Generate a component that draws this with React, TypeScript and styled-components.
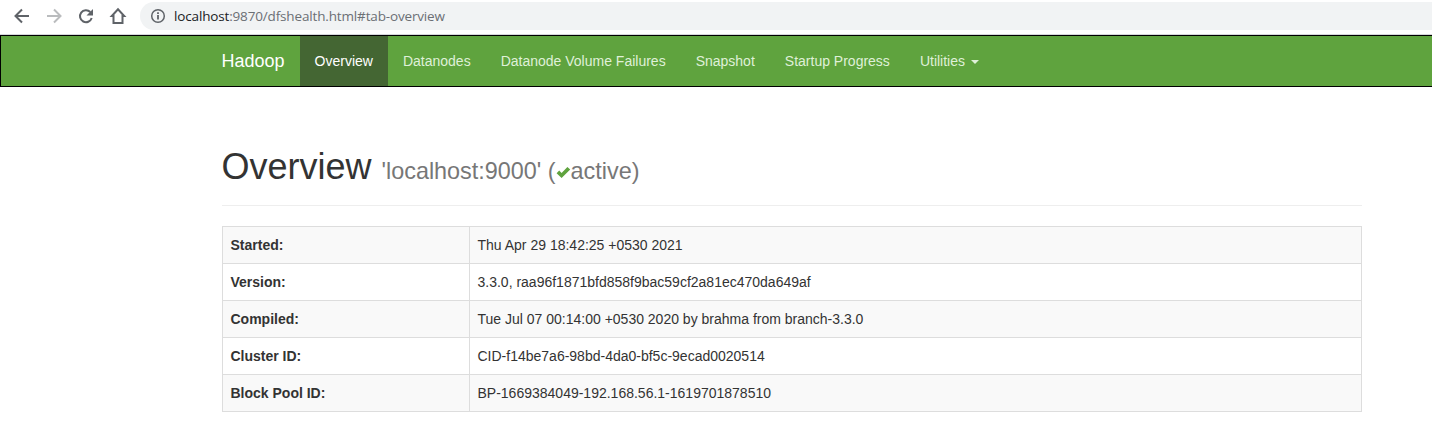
import React from "react";
import styled, { createGlobalStyle } from "styled-components";

const Global = createGlobalStyle`
  *{box-sizing:border-box}
  body{margin:0;background:#fff;color:#333;font:14px/20px "Liberation Sans",Arial,sans-serif;overflow:hidden}
`;
const Toolbar = styled.header`
  height:35px;display:flex;align-items:flex-start;padding:2px 0 0 6px;background:#fff;
  border-bottom:1px solid #d5d7da;
`;
const ToolButton = styled.span`
  width:32px;height:28px;display:flex;align-items:center;justify-content:center;
`;
const AddressBar = styled.div`
  flex:1;height:28px;margin-left:6px;border-radius:14px 0 0 14px;background:#f1f3f4;
  display:flex;align-items:center;gap:8px;padding-left:10px;
`;
const Url = styled.span`
  font:13.5px/20px "Open Sans","Noto Sans",sans-serif;letter-spacing:-0.155px;color:#6b6f74;white-space:pre;
`;
const Host = styled.span`color:#202124;`;
const Navbar = styled.nav`
  height:52px;width:1440px;display:flex;background:#5fa33e;border:1px solid #000;padding-left:205.5px;
`;
const Brand = styled.a`
  padding:15px;font-size:18px;line-height:20px;color:#fff;
`;
const NavItem = styled.a<{ $active?: boolean }>`
  display:flex;align-items:center;padding:15px;line-height:20px;white-space:nowrap;
  color:${p => (p.$active ? "#fff" : "#dff0d8")};
  background:${p => (p.$active ? "#446633" : "transparent")};
`;
const Caret = styled.span`
  margin:2px 0 0 6px;border-top:4px solid;border-left:4px solid transparent;border-right:4px solid transparent;
`;
const Page = styled.main`width:1140px;margin:60px 0 0 222px;`;
const Title = styled.h1`
  margin:0 0 20px;height:59px;border-bottom:1px solid #eee;font-size:36px;line-height:40px;font-weight:400;
  text-indent:-0.5px;
`;
const Small = styled.small`font-size:23.4px;line-height:1;color:#777;`;
const Table = styled.table`
  width:100%;table-layout:fixed;border-collapse:collapse;border:1px solid #ddd;
  th,td{border:1px solid #ddd;padding:8px 8px 8px 7.5px;height:37px;line-height:20px;text-align:left}
  th{width:247px}
  tr:nth-child(odd){background:#f9f9f9}
`;

const rows = [
  ["Started:", "Thu Apr 29 18:42:25 +0530 2021"],
  ["Version:", "3.3.0, raa96f1871bfd858f9bac59cf2a81ec470da649af"],
  ["Compiled:", "Tue Jul 07 00:14:00 +0530 2020 by brahma from branch-3.3.0"],
  ["Cluster ID:", "CID-f14be7a6-98bd-4da0-bf5c-9ecad0020514"],
  ["Block Pool ID:", "BP-1669384049-192.168.56.1-1619701878510"],
];
const links = ["Overview", "Datanodes", "Datanode Volume Failures", "Snapshot", "Startup Progress"];
const icons = [
  { color: "#5f6368", line: "M17 9H4M10 2.5L3.5 9l6.5 6.5" },
  { color: "#babcbe", line: "M3 9h13M10 2.5L16.5 9l-6.5 6.5" },
  {
    color: "#5f6368",
    line: "M14.300 5A6 6 0 1 0 15.700 11",
    fill: "M17 2v6.500h-6.500z",
  },
  { color: "#5f6368", line: "M3.800 9L10 2.300 16.200 9H14.500V16h-9V9z" },
];

export default function App() {
  return (
    <>
      <Global />
      <Toolbar>
        {icons.map((icon, i) => (
          <ToolButton key={i}>
            <svg width="20" height="18" viewBox="0 0 20 18" fill="none" stroke={icon.color} strokeWidth="2">
              <path d={icon.line} />
              {icon.fill && <path d={icon.fill} fill={icon.color} stroke="none" />}
            </svg>
          </ToolButton>
        ))}
        <AddressBar>
          <svg width="16" height="16" viewBox="0 0 16 16" fill="none" stroke="#5f6368" strokeWidth="1.5">
            <circle cx="8" cy="8" r="6.3" /><path d="M8 7v4.500M8 4.300v1.700" strokeWidth="1.8" />
          </svg>
          <Url><Host>localhost</Host>:9870/dfshealth.html#tab-overview</Url>
        </AddressBar>
      </Toolbar>
      <Navbar>
        <Brand>Hadoop</Brand>
        {links.map((l, i) => <NavItem key={l} $active={i === 0}>{l}</NavItem>)}
        <NavItem>Utilities<Caret /></NavItem>
      </Navbar>
      <Page>
        <Title>
          Overview <Small>'localhost:9000' (<svg width="15" height="15" viewBox="0 0 15 15" fill="#5fa33e"><path d="M0.600 9.200L3.200 6.600l2.400 2.400L11.400 3l2.800 2.600-8.600 8.400z" /></svg>active)</Small>
        </Title>
        <Table>
          <tbody>
            {rows.map(([k, v]) => <tr key={k}><th>{k}</th><td>{v}</td></tr>)}
          </tbody>
        </Table>
      </Page>
    </>
  );
}
